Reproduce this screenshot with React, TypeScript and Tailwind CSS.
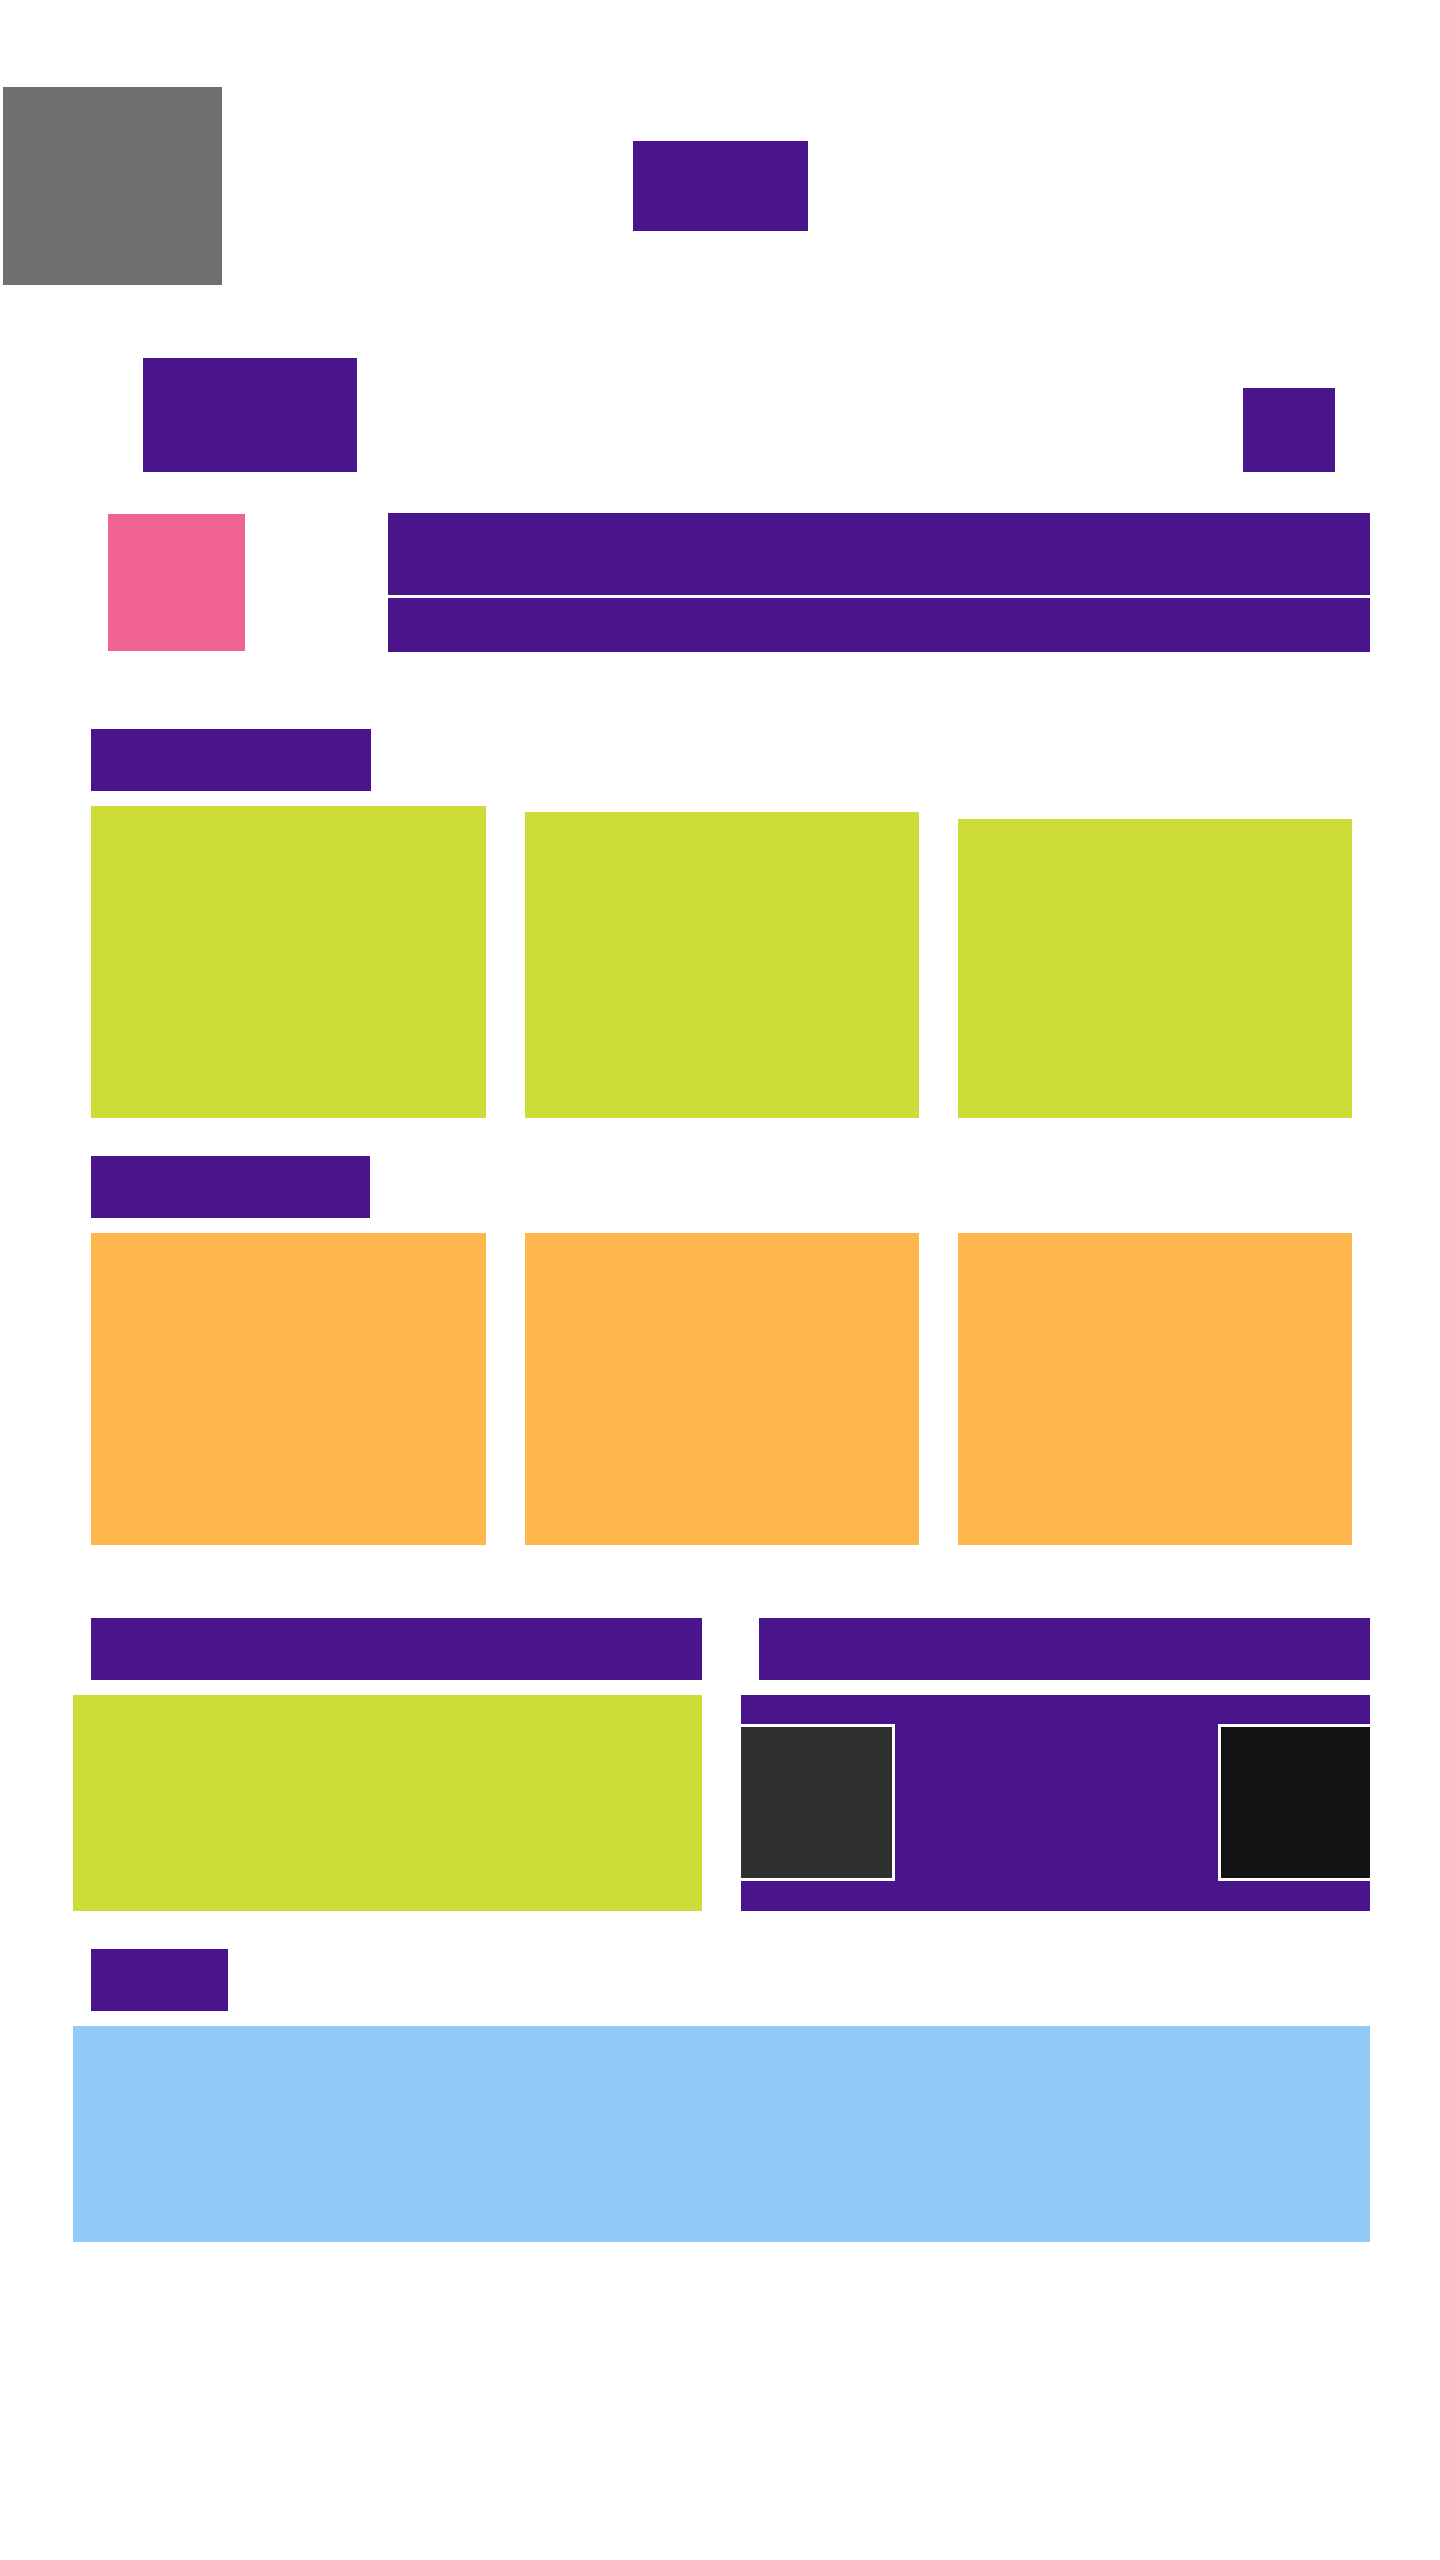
export default function App() {
  return (
    <div className="w-[1440px] min-h-[2560px] bg-white relative" style={{ fontFamily: '"Liberation Sans", sans-serif' }}>
      {/* Header */}
      <div className="pt-[87px] grid grid-cols-[1fr_auto_1fr]">
        <div>
          <div className="ml-[3px] w-[219px] h-[198px] bg-[#6f6f6f]" />
        </div>
        <div className="mt-[54px] w-[175px] h-[90px] bg-[#4a148c]" />
        <div />
      </div>

      {/* Row 2 */}
      <div className="mt-[73px] flex items-end pl-[143px] pr-[105px]">
        <div className="w-[214px] h-[114px] bg-[#4a148c]" />
        <div className="ml-auto w-[92px] h-[84px] bg-[#4a148c]" />
      </div>

      {/* Row 3 */}
      <div className="mt-[41px] flex items-start pl-[108px] pr-[70px]">
        <div className="mt-[1px] w-[137px] h-[137px] bg-[#f06292]" />
        <div className="ml-[143px] flex-1 flex flex-col gap-[3px]">
          <div className="h-[82px] bg-[#4a148c]" />
          <div className="h-[54px] bg-[#4a148c]" />
        </div>
      </div>

      {/* Section 1 */}
      <div className="mt-[77px] pl-[91px]">
        <div className="w-[280px] h-[62px] bg-[#4a148c]" />
        <div className="mt-[15px] w-[1261px] grid grid-cols-[395px_394px_394px] gap-x-[39px] items-end">
          <div className="h-[312px] bg-[#cddc39]" />
          <div className="h-[306px] bg-[#cddc39]" />
          <div className="h-[299px] bg-[#cddc39]" />
        </div>
      </div>

      {/* Section 2 */}
      <div className="mt-[38px] pl-[91px]">
        <div className="w-[279px] h-[62px] bg-[#4a148c]" />
        <div className="mt-[15px] w-[1261px] grid grid-cols-[395px_394px_394px] gap-x-[39px]">
          <div className="h-[312px] bg-[#ffb74d]" />
          <div className="h-[312px] bg-[#ffb74d]" />
          <div className="h-[312px] bg-[#ffb74d]" />
        </div>
      </div>

      {/* Two-column section */}
      <div className="mt-[73px] flex pl-[73px] pr-[70px] gap-[39px]">
        <div className="w-[629px] flex flex-col items-end">
          <div className="w-[611px] h-[62px] bg-[#4a148c]" />
          <div className="mt-[15px] w-[629px] h-[216px] bg-[#cddc39]" />
        </div>
        <div className="w-[629px] flex flex-col items-end">
          <div className="w-[611px] h-[62px] bg-[#4a148c]" />
          <div className="mt-[15px] w-[629px] h-[216px] bg-[#4a148c] overflow-hidden flex items-start pt-[29px]">
            <div className="-ml-[3px] w-[157px] h-[157px] border-[3px] border-white bg-[#303030] shrink-0" />
            <div className="ml-auto -mr-[5px] w-[157px] h-[157px] border-[3px] border-white bg-[#121212] shrink-0" />
          </div>
        </div>
      </div>

      {/* Section 3 */}
      <div className="mt-[38px] pl-[91px]">
        <div className="w-[137px] h-[62px] bg-[#4a148c]" />
      </div>
      <div className="mt-[15px] ml-[73px] w-[1297px] h-[216px] bg-[#90caf9]" />
    </div>
  );
}
